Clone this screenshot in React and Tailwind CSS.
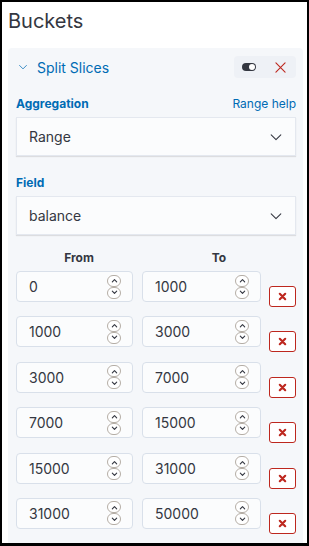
import React from 'react';

const ranges = [
    [0, 1000],
    [1000, 3000],
    [3000, 7000],
    [7000, 15000],
    [15000, 31000],
    [31000, 50000],
];

function ChevronDown({ className }) {
    return (
        <svg className={className} viewBox="0 0 16 16" fill="none">
            <path d="M2.5 5.5 L8 11 L13.5 5.5" stroke="currentColor" strokeWidth="1.2" strokeLinecap="round" strokeLinejoin="round" />
        </svg>
    );
}

function Spinner() {
    return (
        <div className="flex flex-col w-[14px]">
            <div className="h-[12px] rounded-full border border-[#b5aea6] bg-white flex items-center justify-center">
                <svg viewBox="0 0 8 8" className="w-[7px] h-[7px]" fill="none">
                    <path d="M1.5 5.5 L4 3 L6.5 5.5" stroke="#343741" strokeWidth="1.3" strokeLinecap="round" strokeLinejoin="round" />
                </svg>
            </div>
            <div className="h-[12px] rounded-full border border-[#b5aea6] bg-white flex items-center justify-center">
                <svg viewBox="0 0 8 8" className="w-[7px] h-[7px]" fill="none">
                    <path d="M1.5 2.5 L4 5 L6.5 2.5" stroke="#343741" strokeWidth="1.3" strokeLinecap="round" strokeLinejoin="round" />
                </svg>
            </div>
        </div>
    );
}

function NumberField({ value }) {
    return (
        <div className="h-[31px] rounded-[4px] border border-[#d9e0ea] bg-[#fbfcfd] flex items-center pl-[12px] pr-[11px]">
            <span className="flex-1 text-[14px] text-[#343741]">{value}</span>
            <Spinner />
        </div>
    );
}

function SelectBox({ value }) {
    return (
        <div className="h-[39px] bg-[#fbfcfd] border border-[#e4e8ef] shadow-[0_1px_1px_rgba(0,0,0,0.1)] flex items-center pl-[12px] pr-[12px]">
            <span className="flex-1 text-[14px] text-[#343741]">{value}</span>
            <ChevronDown className="w-[14px] h-[14px] text-[#343741]" />
        </div>
    );
}

export default function App() {
    return (
        <div className="w-[309px] h-[546px] border-2 border-b-[3px] border-black bg-white overflow-hidden font-['Inter',sans-serif]">
            <div className="pl-[6px] pr-[4px]">
                <h2 className="text-[20px] leading-[24px] text-[#343741] pt-[7px] pb-[15px]">Buckets</h2>

                <div className="bg-[#f5f7fa] rounded-t-[4px] pt-[8px] pl-[8px] pr-[7px] h-[500px]">
                    <div className="flex items-center h-[22px]">
                        <ChevronDown className="w-[10px] h-[10px] ml-[2px] text-[#006bb4]" />
                        <span className="ml-[9px] text-[14px] text-[#006bb4] flex-1">Split Slices</span>
                        <div className="h-[22px] w-[62px] rounded-[4px] bg-[#eef1f6] flex items-center pl-[8px] gap-[19px]">
                            <svg viewBox="0 0 14 8" className="w-[14px] h-[8px]">
                                <rect x="0" y="0" width="14" height="8" rx="4" fill="#343741" />
                                <circle cx="10" cy="4" r="3" fill="#fff" />
                            </svg>
                            <svg viewBox="0 0 12 12" className="w-[11px] h-[11px]" fill="none">
                                <path d="M1 1 L11 11 M11 1 L1 11" stroke="#bd271e" strokeWidth="1.2" strokeLinecap="round" />
                            </svg>
                        </div>
                    </div>

                    <div className="flex items-center justify-between mt-[18px] h-[16px]">
                        <span className="text-[12px] font-bold text-[#006bb4]">Aggregation</span>
                        <span className="text-[12px] text-[#006bb4]">Range help</span>
                    </div>
                    <div className="mt-[5px]">
                        <SelectBox value="Range" />
                    </div>

                    <div className="mt-[19px] h-[16px] flex items-center">
                        <span className="text-[12px] font-bold text-[#006bb4]">Field</span>
                    </div>
                    <div className="mt-[5px]">
                        <SelectBox value="balance" />
                    </div>

                    <div className="grid grid-cols-[117px_119px_27px] gap-x-[9px] mt-[14px] h-[16px] items-center">
                        <span className="text-[12px] font-bold text-[#343741] text-center pl-[9px]">From</span>
                        <span className="text-[12px] font-bold text-[#343741] text-center pl-[35px]">To</span>
                        <span></span>
                    </div>

                    <div className="flex flex-col gap-[14.4px] mt-[6px]">
                        {ranges.map(([from, to], i) => (
                            <div key={i} className="grid grid-cols-[117px_119px_27px] gap-x-[9px] items-start h-[31px]">
                                <NumberField value={from} />
                                <NumberField value={to} />
                                <button className="mt-[15px] h-[21px] w-[27px] rounded-[3px] border border-[#bd271e] bg-white flex items-center justify-center -ml-[1px]">
                                    <svg viewBox="0 0 10 10" className="w-[9px] h-[9px]" fill="none">
                                        <path d="M2 2 L8 8 M8 2 L2 8" stroke="#bd271e" strokeWidth="2.4" strokeLinecap="round" />
                                    </svg>
                                </button>
                            </div>
                        ))}
                    </div>
                </div>
            </div>
        </div>
    );
}
